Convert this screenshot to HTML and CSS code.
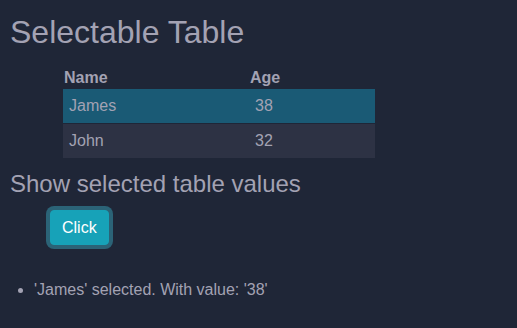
FILE: index.html
```html
<!doctype html>
<html>
	<head>
		<meta charset="utf-8" />
		<title>Selectable Table</title>
		<link rel="stylesheet" href="styles.css">
	</head>
	<body>
		<h1>Selectable Table</h1>
		<table class="sel-table">
			<thead>
				<tr>
					<th class="col-name">Name</th>
					<th>Age</th>
				</tr>
			</thead>
			<tbody>
				<tr class="selected">
					<td>James</td>
					<td>38</td>
				</tr>
				<tr>
					<td>John</td>
					<td>32</td>
				</tr>
			</tbody>
		</table>
		<h2>Show selected table values</h2>
		<div class="btn-container">
			<button class="btn">Click</button>
		</div>
		<ul class="result">
			<li>'James' selected. With value: '38'</li>
		</ul>
	</body>
</html>
```

FILE: styles.css
```css
html, body, h1, h2, ul, li { margin: 0; padding: 0; }
body { background: #1f2637; color: #a3a2b3; font-family: "Liberation Sans", Arial, sans-serif; padding: 0 10px; }

h1 { font-size: 32px; font-weight: normal; line-height: 37px; padding-top: 14px; }
h2 { font-size: 24px; font-weight: normal; line-height: 28px; margin-top: 12px; }

.sel-table { border-collapse: collapse; width: 312px; margin: 16px 0 0 53px; font-size: 16px; }
.sel-table th { text-align: left; font-weight: bold; padding: 0 1px; height: 22px; line-height: 22px; vertical-align: top; }
.sel-table .col-name { width: 184px; }
.sel-table td { padding: 0 6px; height: 34px; }
.sel-table tbody tr { background: #2d3244; }
.sel-table tbody tr.selected { background: #1a5a75; }
.sel-table tbody tr.selected td { border-bottom: 1px solid #1f2637; }

.btn-container { margin: 12px 0 0 40px; }
.btn { font-family: "Liberation Sans", Arial, sans-serif; font-size: 16px; color: #fff; background: #17a2b8; border: 1px solid #17a2b8; border-radius: 4px; padding: 0 11px; height: 35px; box-shadow: 0 0 0 4px #2b6377; }

.result { margin-top: 36px; padding-left: 24px; font-size: 16px; }
.result li { line-height: 18px; }
```
